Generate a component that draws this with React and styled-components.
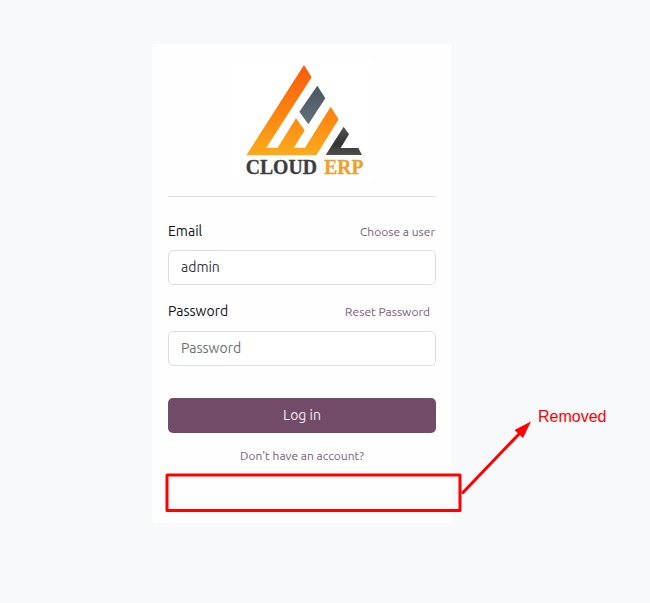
import React from "react";
import styled, { createGlobalStyle } from "styled-components";

const GlobalStyle = createGlobalStyle`
  * { box-sizing: border-box; }
  body {
    margin: 0;
    background: #f8f9fb;
    font-family: Ubuntu, "Noto Sans", sans-serif;
    font-size: 14px;
    color: #111;
  }
`;

const Page = styled.main`
  position: relative;
  width: 650px;
  height: 603px;
  padding: 44px 0 0 152px;
  overflow: hidden;
`;

const Card = styled.form`
  display: flex;
  flex-direction: column;
  width: 300px;
  height: 479px;
  padding: 6px 16px 12px;
  background: #fefefe;
  border-radius: 4px;
`;

const LogoArea = styled.header`
  display: flex;
  justify-content: center;
  height: 147px;
  margin-bottom: 21px;
  padding-left: 6px;
  border-bottom: 1px solid #dee0e2;
`;

const Logo = styled.svg`
  width: 160px;
  height: 140px;
  flex: none;
`;

const Field = styled.div`
  display: flex;
  flex-direction: column;
  height: ${(p) => p.$height}px;
`;

const FieldHeader = styled.div`
  display: flex;
  justify-content: space-between;
  align-items: center;
  height: ${(p) => p.$height}px;
  padding-bottom: 7px;
`;

const Label = styled.label`
  line-height: 20px;
  white-space: nowrap;
`;

const Link = styled.a`
  padding-top: 2px;
  margin-right: ${(p) => p.$inset || 0}px;
  font-size: 12px;
  line-height: 18px;
  color: #7c5c76;
  white-space: nowrap;
`;

const Input = styled.input`
  width: 100%;
  height: 35px;
  padding: 0 12px 2px;
  border: 1px solid #dcdee3;
  border-radius: 5px;
  outline: none;
  background: #fff;
  color: #33363c;
  font: inherit;
  &::placeholder { color: #6b6e73; opacity: 1; }
`;

const Button = styled.button`
  flex: none;
  height: 35px;
  padding: 0 0 2px;
  border: 0;
  border-radius: 5px;
  background: #714b67;
  color: #f3eef2;
  font: inherit;
`;

const Signup = styled.div`
  display: flex;
  justify-content: center;
  margin-top: 12px;
`;

const Annotation = styled.svg`
  position: absolute;
  left: 160px;
  top: 400px;
  width: 460px;
  height: 120px;
  pointer-events: none;
`;

function CloudLogo() {
  return (
    <Logo viewBox="0 0 480 420" role="img" aria-label="Cloud ERP">
      <defs>
        <linearGradient id="flame" gradientUnits="userSpaceOnUse" x1="0" y1="45" x2="0" y2="316">
          <stop offset="0" stopColor="#fb5a0b" />
          <stop offset="0.55" stopColor="#fc8512" />
          <stop offset="1" stopColor="#fbac1b" />
        </linearGradient>
        <linearGradient id="slate" x1="0" y1="0" x2="0" y2="1">
          <stop offset="0" stopColor="#485661" />
          <stop offset="1" stopColor="#64707a" />
        </linearGradient>
        <linearGradient id="coal" x1="0" y1="0" x2="0" y2="1">
          <stop offset="0" stopColor="#535353" />
          <stop offset="0.6" stopColor="#343434" />
          <stop offset="1" stopColor="#505050" />
        </linearGradient>
      </defs>
      <rect x="16" y="30" width="428" height="362" fill="#fff" />
      <path fill="url(#flame)" d="M237 45 260 82 124 293H158L213 205 239 241 207 293H240L317 170 341 208 274 316H64Z" />
      <path fill="url(#slate)" d="M277 107 301 145 250 223 223 185Z" />
      <path fill="url(#coal)" d="M356 230 372 253 347 294H400L411 315H302Z" />
      <g fontFamily="'Liberation Serif', serif" fontWeight="700" fontSize="60" strokeWidth="1">
        <text x="62" y="371" textLength="214" lengthAdjust="spacingAndGlyphs" fill="#3d3d3f" stroke="#3d3d3f">CLOUD</text>
        <text x="298" y="371" textLength="117" lengthAdjust="spacingAndGlyphs" fill="#eea02e" stroke="#eea02e">ERP</text>
      </g>
    </Logo>
  );
}

export default function App() {
  return (
    <>
      <GlobalStyle />
      <Page>
        <Card onSubmit={(e) => e.preventDefault()}>
          <LogoArea><CloudLogo /></LogoArea>
          <Field $height={80}>
            <FieldHeader $height={32}>
              <Label htmlFor="email">Email</Label>
              <Link $inset={1}>Choose a user</Link>
            </FieldHeader>
            <Input id="email" defaultValue="admin" />
          </Field>
          <Field $height={100}>
            <FieldHeader $height={33}>
              <Label htmlFor="password">Password</Label>
              <Link $inset={6}>Reset Password</Link>
            </FieldHeader>
            <Input id="password" type="password" placeholder="Password" />
          </Field>
          <Button type="submit">Log in</Button>
          <Signup><Link>Don't have an account?</Link></Signup>
        </Card>
        <Annotation viewBox="160 400 460 120">
          <rect x="167" y="475" width="293" height="35.5" fill="none" stroke="#f00" strokeWidth="3" strokeLinejoin="round" />
          <path d="M463 492.5 520 433" fill="none" stroke="#f00" strokeWidth="3" strokeLinecap="round" />
          <path d="M531 421.5 514.5 430 523 438Z" fill="#f00" />
          <text x="538" y="422" fill="#f00" fontFamily="'Liberation Sans', Arial, sans-serif" fontSize="16">Removed</text>
        </Annotation>
      </Page>
    </>
  );
}
